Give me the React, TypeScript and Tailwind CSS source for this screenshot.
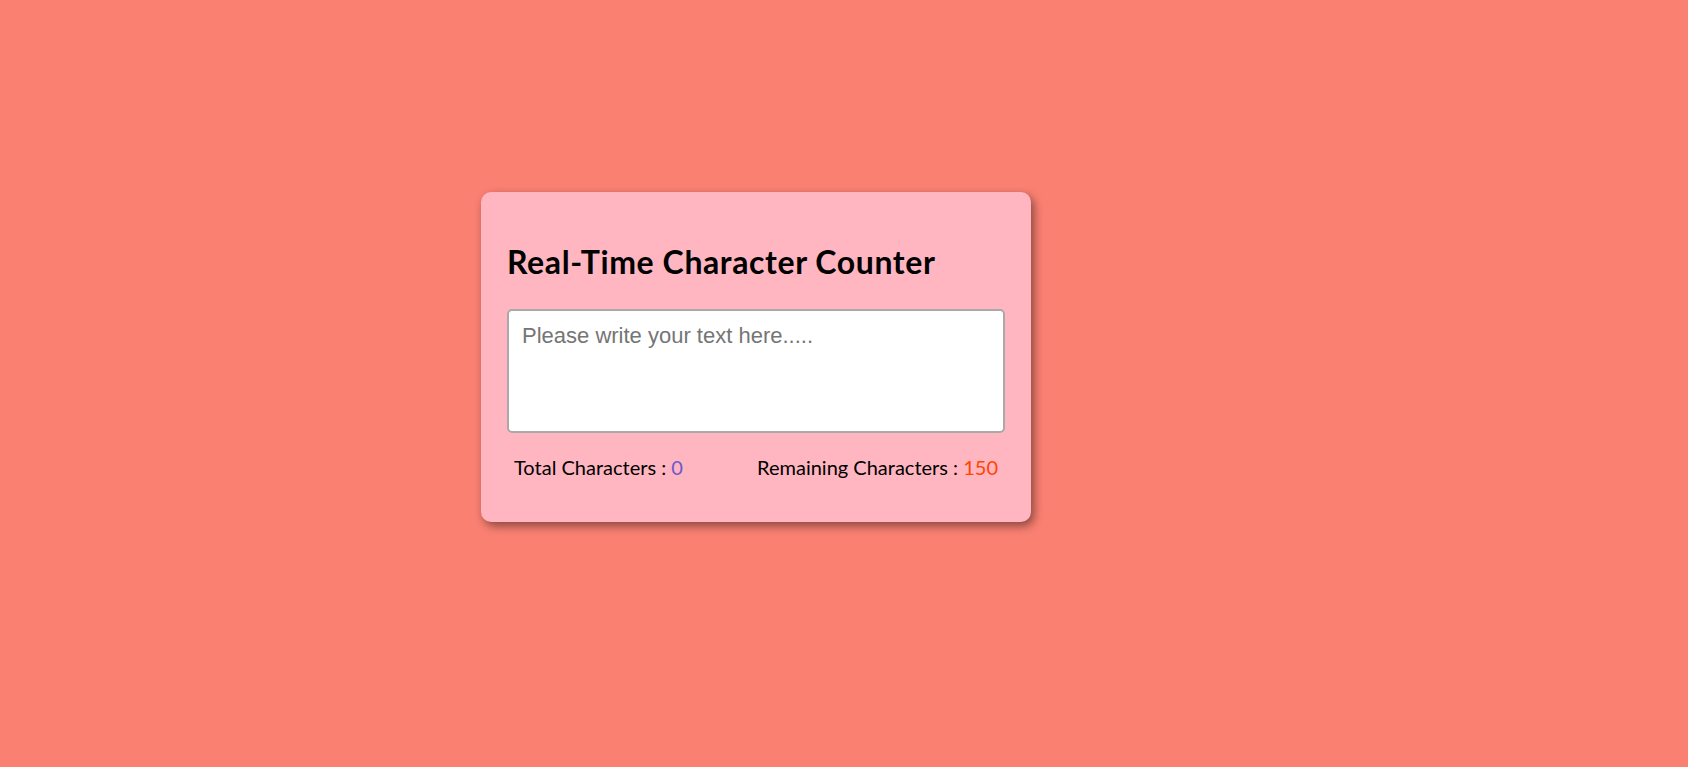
import React, { useState } from "react";

export default function App() {
  const [text, setText] = useState("");
  const max = 150;
  return (
    <div className="min-h-[767px] w-full bg-[#fa8072] pl-[481px] pt-[192px]">
      <div className="w-[550px] h-[330px] rounded-[10px] bg-[#ffb6c1] px-[26px] pt-[51px] shadow-[3px_4px_10px_rgba(0,0,0,0.45)] font-['Comic_Sans_MS','Lato',sans-serif]">
        <h1 className="text-[32px] leading-[38px] font-bold text-black tracking-[0.6px]">
          Real-Time Character Counter
        </h1>
        <textarea
          value={text}
          maxLength={max}
          onChange={(e) => setText(e.target.value)}
          placeholder="Please write your text here....."
          className="mt-[28px] block w-[498px] h-[124px] resize-none rounded-[5px] border-2 border-[#a9a9a9] bg-white px-[13px] py-[12px] text-[22px] leading-[25px] font-['Liberation_Sans',Arial,sans-serif] text-black placeholder:text-[#757575] outline-none"
        />
        <div className="mt-[21px] flex justify-between px-[7px] text-[20px] leading-[26px] text-black">
          <span>
            Total Characters : <span className="text-[#6a5acd]">{text.length}</span>
          </span>
          <span>
            Remaining Characters : <span className="text-[#ff4500]">{max - text.length}</span>
          </span>
        </div>
      </div>
    </div>
  );
}
